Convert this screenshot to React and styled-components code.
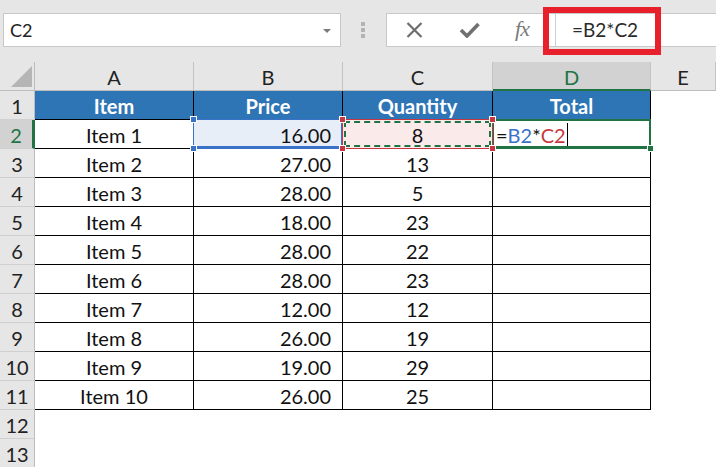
import React from 'react';
import styled, { createGlobalStyle } from 'styled-components';

const GlobalStyle = createGlobalStyle`
  html, body {
    margin: 0;
    padding: 0;
    background: #ffffff;
    overflow: hidden;
  }
  body {
    font-family: Lato, "Open Sans", Arial, sans-serif;
    color: #111;
  }
`;

const GREEN = '#217346';
const BLUE = '#3a72c8';
const RED = '#c8373f';

const Page = styled.div`
  width: 716px;
  height: 467px;
  overflow: hidden;
`;

const TopBar = styled.div`
  height: 62px;
  box-sizing: border-box;
  background: #e6e6e6;
  display: flex;
  align-items: flex-start;
  padding: 13px 0 0 3px;
`;

const NameBox = styled.div`
  width: 338px;
  height: 34px;
  box-sizing: border-box;
  background: #fff;
  border: 1px solid #c9c9c9;
  display: flex;
  align-items: center;
  justify-content: space-between;
  padding: 0 9px 0 6px;
  font-size: 18px;
  color: #222;
`;

const DropArrow = styled.span`
  width: 0;
  height: 0;
  border-left: 4px solid transparent;
  border-right: 4px solid transparent;
  border-top: 4px solid #7a7a7a;
  margin-top: 1px;
`;

const Grip = styled.div`
  display: flex;
  flex-direction: column;
  gap: 2px;
  margin: 9px 0 0 20px;

  span {
    width: 4px;
    height: 4px;
    background: #b3b3b3;
  }
`;

const FormulaBar = styled.div`
  position: relative;
  flex: 1;
  margin: 0 -4px 0 21px;
  height: 34px;
  box-sizing: border-box;
  background: #fff;
  border: 1px solid #c9c9c9;
  display: flex;
  align-items: stretch;
`;

const IconButton = styled.div`
  width: ${(p) => p.$w}px;
  display: flex;
  align-items: center;
  justify-content: center;
  padding-right: ${(p) => p.$pr || 0}px;
  box-sizing: border-box;
  color: #6e6e6e;
`;

const Fx = styled.span`
  font-family: "Liberation Serif", "DejaVu Serif", serif;
  font-style: italic;
  font-size: 22px;
  color: #7a7a7a;
  letter-spacing: -1px;
  margin-top: -2px;
`;

const FormulaInput = styled.div`
  flex: 1;
  border-left: 1px solid #d0d0d0;
  padding-left: 16px;
  font-size: 19px;
  line-height: 32px;
  color: #2b2b2b;
`;

const Annotation = styled.div`
  position: absolute;
  left: 156px;
  top: -7px;
  width: 118px;
  height: 48px;
  box-sizing: border-box;
  border: 6px solid #e8202b;
  pointer-events: none;
`;

const Sheet = styled.div`
  display: grid;
  grid-template-columns: 35px 159px 149px 150px 158px 1fr;
  grid-auto-rows: 29px;
`;

const Corner = styled.div`
  background: #e6e6e6;
  border-right: 1px solid #bdbdbd;
  border-bottom: 1px solid #bdbdbd;
  box-sizing: border-box;
  display: flex;
  align-items: flex-end;
  justify-content: flex-end;
  padding: 0 2px 3px 0;
`;

const ColHead = styled.div`
  box-sizing: border-box;
  background: ${(p) => (p.$active ? '#d2d2d2' : '#e6e6e6')};
  color: ${(p) => (p.$active ? GREEN : '#222')};
  border-right: 1px solid #c3c3c3;
  border-bottom: ${(p) => (p.$active ? `2px solid ${GREEN}` : '1px solid #bdbdbd')};
  text-align: center;
  font-size: 20px;
  line-height: 29px;
  padding-top: 1px;
`;

const RowHead = styled.div`
  box-sizing: border-box;
  background: ${(p) => (p.$active ? '#d2d2d2' : '#e6e6e6')};
  color: ${(p) => (p.$active ? GREEN : '#222')};
  border-right: ${(p) => (p.$active ? `3px solid ${GREEN}` : '1px solid #bdbdbd')};
  border-bottom: 1px solid #cfcfcf;
  text-align: center;
  font-size: 20px;
  line-height: 29px;
  padding-top: 1px;
`;

const Cell = styled.div`
  position: relative;
  box-sizing: border-box;
  background: ${(p) => p.$bg || '#fff'};
  color: ${(p) => (p.$head ? '#fff' : '#111')};
  font-weight: ${(p) => (p.$head ? 700 : 400)};
  text-align: ${(p) => p.$align || 'center'};
  border-right: ${(p) => (p.$lined ? '1px solid #000' : 'none')};
  border-bottom: ${(p) => (p.$lined ? '1px solid #000' : 'none')};
  font-size: 20px;
  line-height: 29px;
  padding: 1px ${(p) => (p.$align === 'right' ? '11px' : p.$align === 'left' ? '3px' : '0')} 0;
  white-space: nowrap;
`;

const Frame = styled.span`
  position: absolute;
  inset: ${(p) => p.$inset};
  border: ${(p) => p.$border};
  border-bottom-width: ${(p) => p.$bottom || ''};
  pointer-events: none;
  z-index: ${(p) => p.$z || 1};
`;

const Handle = styled.span`
  position: absolute;
  width: 7px;
  height: 7px;
  box-sizing: border-box;
  background: ${(p) => p.$color};
  border: 1px solid #fff;
  ${(p) => (p.$x === 'left' ? 'left: -4px;' : 'right: -4px;')}
  ${(p) => (p.$y === 'top' ? 'top: -4px;' : 'bottom: -4px;')}
  z-index: ${(p) => p.$z || 2};
`;

const Ref = styled.span`
  color: ${(p) => p.$color};
`;

const Caret = styled.span`
  display: inline-block;
  width: 1px;
  height: 26px;
  background: #000;
  vertical-align: -6px;
  margin-left: 1px;
`;

const corners = [
  ['left', 'top'],
  ['right', 'top'],
  ['left', 'bottom'],
  ['right', 'bottom'],
];

const rows = [
  ['Item 1', '16.00', 8],
  ['Item 2', '27.00', 13],
  ['Item 3', '28.00', 5],
  ['Item 4', '18.00', 23],
  ['Item 5', '28.00', 22],
  ['Item 6', '28.00', 23],
  ['Item 7', '12.00', 12],
  ['Item 8', '26.00', 19],
  ['Item 9', '19.00', 29],
  ['Item 10', '26.00', 25],
];

const App = () => {
  return (
    <Page>
      <GlobalStyle />
      <TopBar>
        <NameBox>
          C2
          <DropArrow />
        </NameBox>
        <Grip>
          <span />
          <span />
          <span />
        </Grip>
        <FormulaBar>
          <IconButton $w={54}>
            <svg width="17" height="16" viewBox="0 0 17 16">
              <path d="M1.5 1 L15.5 15 M15.5 1 L1.5 15" stroke="#6e6e6e" strokeWidth="2.2" fill="none" />
            </svg>
          </IconButton>
          <IconButton $w={56}>
            <svg width="21" height="16" viewBox="0 0 21 16">
              <path d="M2 8 L8 14 L19.5 2" stroke="#707070" strokeWidth="3.6" fill="none" />
            </svg>
          </IconButton>
          <IconButton $w={58} $pr={8}>
            <Fx>fx</Fx>
          </IconButton>
          <FormulaInput>=B2*C2</FormulaInput>
          <Annotation />
        </FormulaBar>
      </TopBar>

      <Sheet>
        <Corner>
          <svg width="21" height="21" viewBox="0 0 21 21">
            <polygon points="0,21 21,21 21,0" fill="#b5b5b5" />
          </svg>
        </Corner>
        <ColHead>A</ColHead>
        <ColHead>B</ColHead>
        <ColHead>C</ColHead>
        <ColHead $active>D</ColHead>
        <ColHead>E</ColHead>

        <RowHead>1</RowHead>
        <Cell $head $lined $bg="#2e75b6">Item</Cell>
        <Cell $head $lined $bg="#2e75b6">Price</Cell>
        <Cell $head $lined $bg="#2e75b6">Quantity</Cell>
        <Cell $head $lined $bg="#2e75b6">Total</Cell>
        <Cell />

        {rows.map(([item, price, qty], i) => {
          const first = i === 0;
          return (
            <React.Fragment key={item}>
              <RowHead $active={first}>{i + 2}</RowHead>
              <Cell $lined>{item}</Cell>
              <Cell $lined $align="right" $bg={first ? '#e8eef8' : undefined}>
                {price}
                {first && (
                  <>
                    <Frame $inset="-1px 0 -1px -1px" $border={`1px solid ${BLUE}`} $bottom="3px" />
                    {corners.map(([x, y]) => (
                      <Handle key={x + y} $x={x} $y={y} $color={BLUE} />
                    ))}
                  </>
                )}
              </Cell>
              <Cell $lined $bg={first ? '#fbeaea' : undefined}>
                {qty}
                {first && (
                  <>
                    <Frame $inset="-1px -1px -1px -1px" $border={`1px solid ${RED}`} $z={2} />
                    <Frame $inset="1px 1px 1px 1px" $border={`2px dashed ${GREEN}`} $z={2} />
                    {corners.map(([x, y]) => (
                      <Handle key={x + y} $x={x} $y={y} $color={RED} $z={3} />
                    ))}
                  </>
                )}
              </Cell>
              <Cell $lined $align={first ? 'left' : undefined}>
                {first && (
                  <>
                    =<Ref $color={BLUE}>B2</Ref>*<Ref $color={RED}>C2</Ref>
                    <Caret />
                    <Frame $inset="-1px -1px -1px -1px" $border={`2px solid ${GREEN}`} $bottom="3px" />
                    <Handle $x="right" $y="bottom" $color={GREEN} />
                  </>
                )}
              </Cell>
              <Cell />
            </React.Fragment>
          );
        })}

        {[12, 13].map((n) => (
          <React.Fragment key={n}>
            <RowHead>{n}</RowHead>
            <Cell />
            <Cell />
            <Cell />
            <Cell />
            <Cell />
          </React.Fragment>
        ))}
      </Sheet>
    </Page>
  );
};

export default App;
